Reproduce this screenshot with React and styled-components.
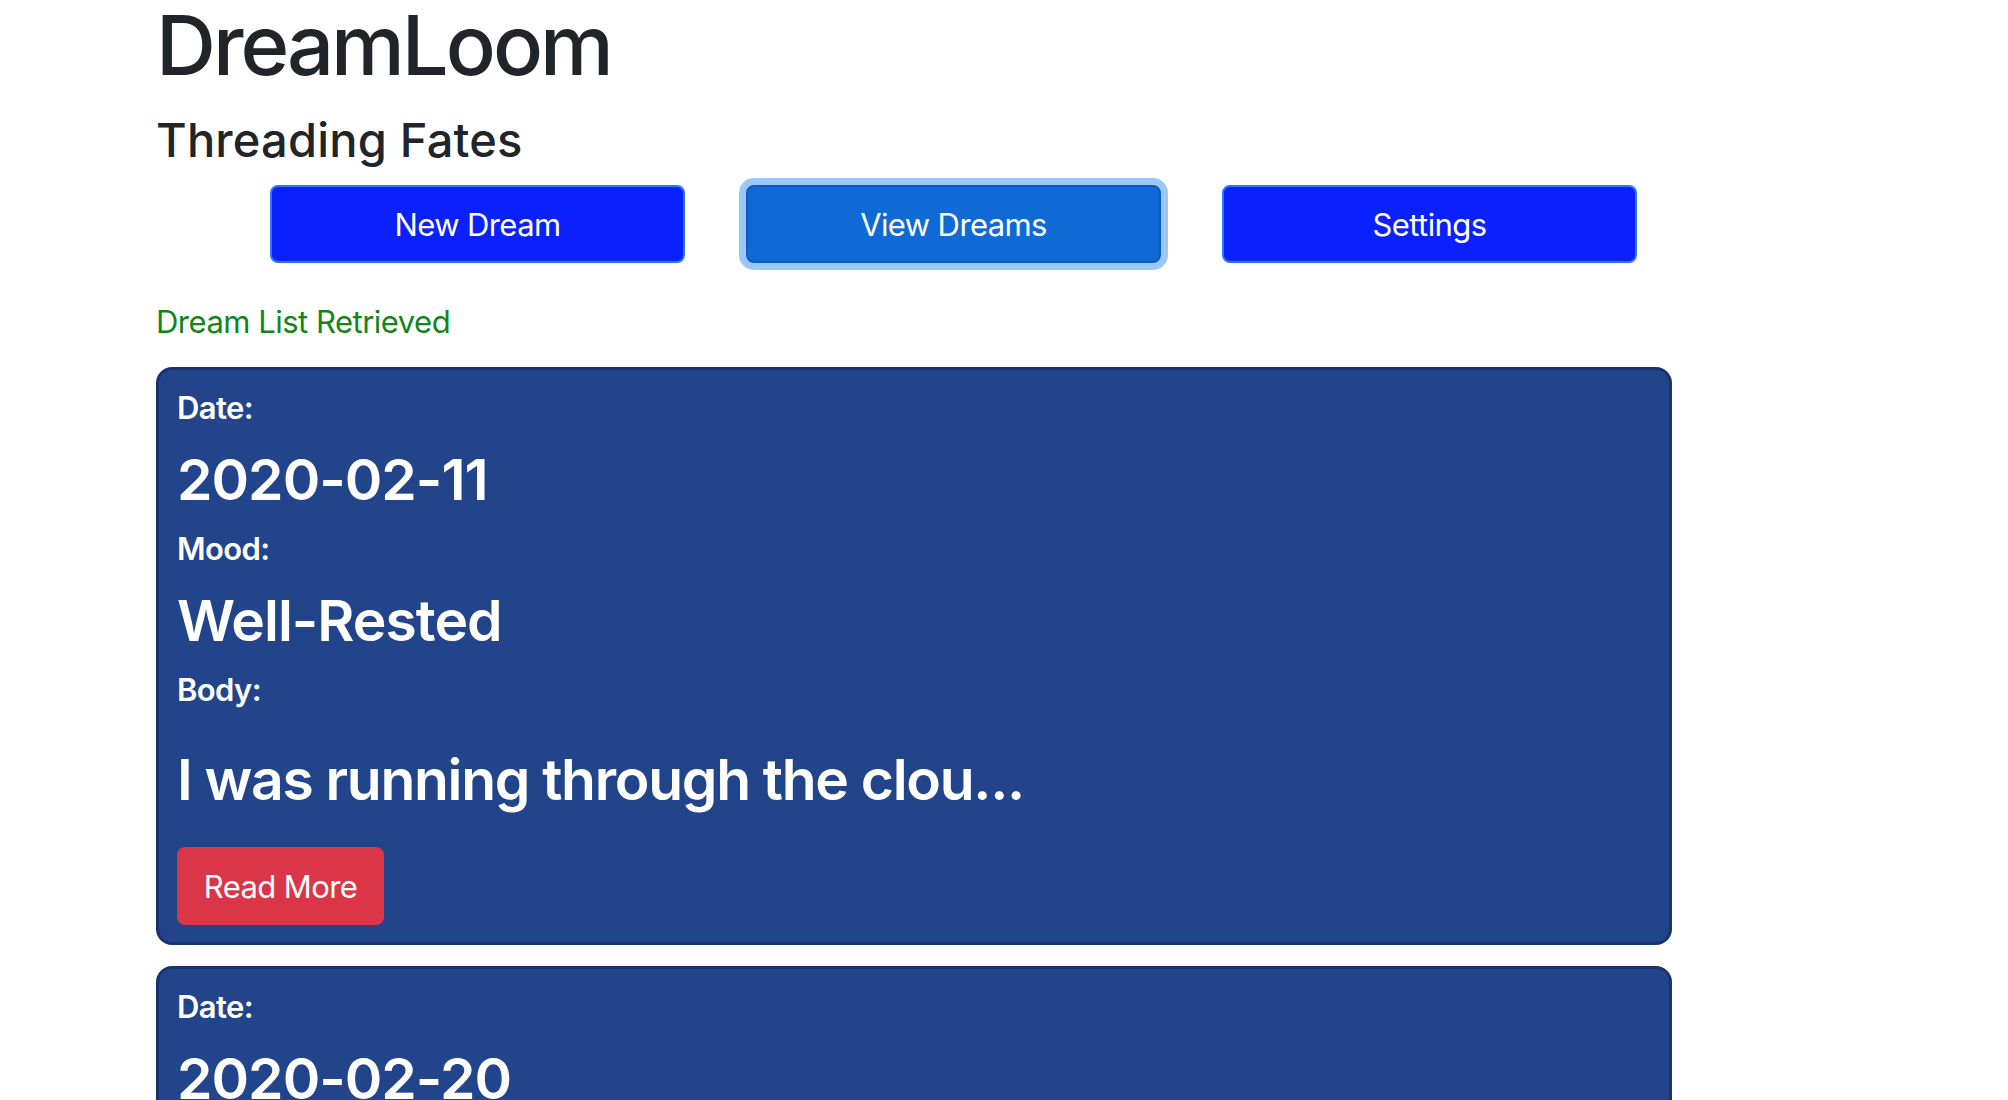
import React from 'react';
import styled, { createGlobalStyle } from 'styled-components';

const GlobalStyle = createGlobalStyle`
    body {
        margin: 0;
        background: #ffffff;
        font-family: Inter, "Noto Sans", sans-serif;
        color: #212529;
    }
`

const Page = styled.div`
    width: 1516px;
    padding-left: 156px;
`

const Title = styled.h1`
    margin: 0;
    font-size: 83px;
    line-height: 90px;
    font-weight: 500;
    letter-spacing: -3px;
`

const Subtitle = styled.h4`
    margin: 22px 0 0;
    font-size: 47px;
    line-height: 56px;
    font-weight: 500;
    letter-spacing: 0.2px;
`

const NavRow = styled.div`
    display: flex;
    gap: 61px;
    margin: 17px 0 0 114px;
`

const NavButton = styled.button`
    width: 415px;
    height: 78px;
    border-radius: 8px;
    border: 2px solid ${({ active }) => (active ? '#0a5cc4' : '#2a78ff')};
    background-color: ${({ active }) => (active ? '#106ad6' : '#0b20ff')};
    box-shadow: ${({ active }) => (active ? '0 0 0 7px #9cc7fb' : 'none')};
    color: #ffffff;
    font-family: Inter, sans-serif;
    font-size: 31px;
    letter-spacing: -0.6px;
    cursor: pointer;
`

const Status = styled.div`
    margin-top: 35px;
    font-size: 31px;
    line-height: 48px;
    color: #12851a;
    letter-spacing: -0.5px;
`

const DreamList = styled.div`
    display: flex;
    flex-direction: column;
    gap: 21px;
    margin-top: 21px;
`

const Card = styled.div`
    background-color: #22448a;
    border: 3px solid #19346c;
    border-radius: 16px;
    padding: 18px 18px 17px;
    color: #ffffff;
`

const Label = styled.div`
    font-size: 31px;
    line-height: 40px;
    font-weight: 600;
    letter-spacing: -0.6px;
`

const Value = styled.h3`
    margin: ${({ body }) => (body ? '38px 0 35px' : '20px 0 17px')};
    font-size: 57px;
    line-height: 64px;
    font-weight: 600;
    letter-spacing: ${({ body }) => (body ? '-1.3px' : '-1px')};
`

const ReadMore = styled.button`
    width: 207px;
    height: 78px;
    border: none;
    border-radius: 8px;
    background-color: #db3647;
    color: #ffffff;
    font-family: Inter, sans-serif;
    font-size: 31px;
    letter-spacing: -0.6px;
    cursor: pointer;
`

const dreams = [
    { date: '2020-02-11', mood: 'Well-Rested', body: 'I was running through the clou...' },
    { date: '2020-02-20', mood: 'Anxious', body: 'I was standing on a stage and...' },
]

const App = () => {
    return (
        <Page>
            <GlobalStyle />
            <Title>DreamLoom</Title>
            <Subtitle>Threading Fates</Subtitle>
            <NavRow>
                <NavButton>New Dream</NavButton>
                <NavButton active>View Dreams</NavButton>
                <NavButton>Settings</NavButton>
            </NavRow>
            <Status>Dream List Retrieved</Status>
            <DreamList>
                {dreams.map((dream) => (
                    <Card key={dream.date}>
                        <Label>Date:</Label>
                        <Value>{dream.date}</Value>
                        <Label>Mood:</Label>
                        <Value>{dream.mood}</Value>
                        <Label>Body:</Label>
                        <Value body>{dream.body}</Value>
                        <ReadMore>Read More</ReadMore>
                    </Card>
                ))}
            </DreamList>
        </Page>
    )
}

export default App;
